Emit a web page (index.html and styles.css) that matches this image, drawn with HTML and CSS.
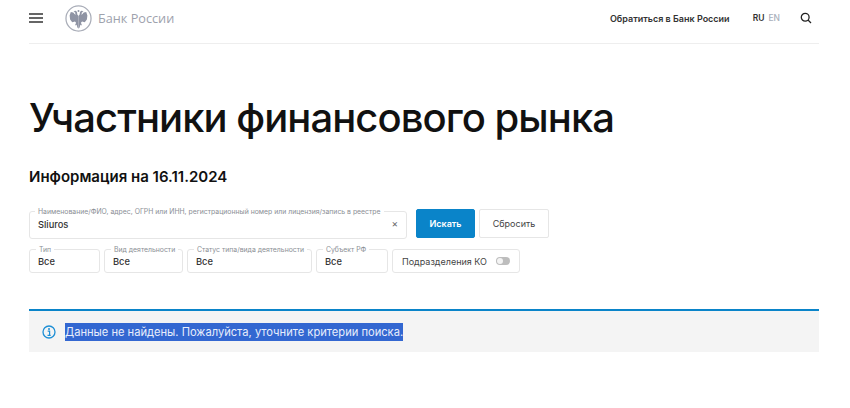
FILE: index.html
```
<!DOCTYPE html>
<html lang="ru">
<head>
<meta charset="utf-8">
<title>Участники финансового рынка</title>
<link rel="stylesheet" href="styles.css">
</head>
<body>
<div class="page">
  <header class="top">
    <div class="menu-icon"><span></span><span></span><span></span></div>
    <div class="brand">
      <svg class="emblem" width="27" height="27" viewBox="0 0 28 28">
        <circle cx="14" cy="14" r="13" fill="none" stroke="#a9adb8" stroke-width="1.300"/>
        <g fill="#8f94a4">
          <path id="half" d="M14 11.500L12.800 9.800 12.500 7.500Q11.900 5.600 10.300 6L8.800 7.300 10.500 7.600 10.900 10.300 8.500 7.900 6 7.300 4.800 11 5.300 15 7.500 17.800 10.300 17 11.500 18.500 10.300 21.200 12 20.600 13 23.500 14 24.300Z"/>
          <use href="#half" transform="matrix(-1 0 0 1 28 0)"/>
          <circle cx="14" cy="6.200" r="1"/>
        </g>
      </svg>
      <span class="brand-name">Банк России</span>
    </div>
    <nav class="tools">
      <span class="contact">Обратиться в Банк России</span>
      <span class="langs"><b>RU</b><i>EN</i></span>
      <svg class="search" width="12" height="12" viewBox="0 0 12 12">
        <circle cx="5.200" cy="5.200" r="3.900" fill="none" stroke="#222" stroke-width="1.300"/>
        <path d="M8 8l3 3" stroke="#222" stroke-width="1.300" fill="none"/>
      </svg>
    </nav>
  </header>

  <main>
    <h1 class="title">Участники финансового рынка</h1>
    <h2 class="subtitle">Информация на 16.11.2024</h2>

    <div class="row row-search">
      <div class="field field-main">
        <span class="legend">Наименование/ФИО, адрес, ОГРН или ИНН, регистрационный номер или лицензия/запись в реестре</span>
        <span class="value">Sliuros</span>
        <span class="clear">×</span>
      </div>
      <button class="btn btn-primary" type="button">Искать</button>
      <button class="btn btn-reset" type="button">Сбросить</button>
    </div>

    <div class="row row-filters">
      <div class="field f-type"><span class="legend">Тип</span><span class="value">Все</span></div>
      <div class="field f-kind"><span class="legend">Вид деятельности</span><span class="value">Все</span></div>
      <div class="field f-status"><span class="legend">Статус типа/вида деятельности</span><span class="value">Все</span></div>
      <div class="field f-region"><span class="legend">Субъект РФ</span><span class="value">Все</span></div>
      <div class="toggle-box"><span>Подразделения КО</span><span class="switch"><span class="knob"></span></span></div>
    </div>

    <div class="notice">
      <svg class="info" width="14" height="14" viewBox="0 0 14 14">
        <circle cx="7" cy="7" r="6" fill="none" stroke="#1e8fd5" stroke-width="1.300"/>
        <circle cx="7" cy="4.100" r="1" fill="#1e8fd5"/>
        <path d="M5.700 6.200H7.600V10M5.500 10.300H8.700" fill="none" stroke="#1e8fd5" stroke-width="1.200"/>
      </svg>
      <span class="selected">Данные не найдены. Пожалуйста, уточните критерии поиска.</span>
    </div>
  </main>
</div>
</body>
</html>
```
FILE: styles.css
```
* { box-sizing: border-box; }
html, body { margin: 0; padding: 0; background: #fff; }
body { font-family: Inter, "Liberation Sans", sans-serif; color: #222; overflow: hidden; height: 408px; }
.page { width: 790px; margin-left: 29px; }
.top { height: 44px; border-bottom: 1px solid #eeeeee; display: flex; align-items: center; padding-bottom: 7px; }
.menu-icon { width: 14px; display: flex; flex-direction: column; gap: 2px; margin-right: 22px; }
.menu-icon span { display: block; height: 2px; background: #666; }
.brand { display: flex; align-items: center; gap: 6px; }
.brand-name { font-family: "Open Sans", sans-serif; font-size: 12.700px; color: #9ea2ad; }
.tools { margin-left: auto; display: flex; align-items: center; font-size: 9px; font-weight: 600; padding-right: 7px; }
.contact { color: #333; margin-right: 23px; }
.langs { display: flex; gap: 4px; margin-right: 20px; font-size: 8.500px; }
.langs b { font-weight: 600; color: #333; }
.langs i { font-style: normal; font-weight: 500; color: #a9afbb; }
.title { margin: 51px 0 0; font-size: 40px; line-height: 46px; font-weight: 500; color: #111; letter-spacing: -0.950px; }
.subtitle { margin: 27px 0 0; font-size: 15px; line-height: 18px; font-weight: 600; color: #111; }
.row { display: flex; }
.row-search { margin-top: 23px; gap: 9px; align-items: flex-end; }
.row-filters { margin-top: 11px; gap: 4px; }
.field { position: relative; height: 24px; border: 1px solid #e6e6e6; border-radius: 3px; display: flex; align-items: center; padding-left: 8px; background: #fff; }
.field-main { width: 378px; height: 28px; margin-bottom: -1px; padding-bottom: 2px; }
.field-main .legend { left: 5px; }
.legend { position: absolute; top: -5px; left: 6px; padding: 0 3px; background: #fff; font-size: 6.860px; line-height: 9px; color: #8b8f96; white-space: nowrap; }
.value { font-size: 9.300px; font-weight: 500; color: #333; }
.clear { position: absolute; right: 8px; top: 5px; font-size: 10px; line-height: 12px; color: #666; }
.btn { height: 29px; border-radius: 2px; font-family: inherit; font-size: 9px; padding: 0; }
.btn-primary { width: 59px; border: 1px solid #0a84c9; background: #0a84c9; color: #fff; font-weight: 600; }
.btn-reset { width: 70px; margin-left: -5px; border: 1px solid #e6e6e6; background: #fff; color: #444; }
.f-type { width: 71px; }
.f-kind { width: 79px; }
.f-status { width: 125px; }
.f-region { width: 72px; }
.toggle-box { width: 128px; height: 24px; border: 1px solid #e6e6e6; border-radius: 3px; display: flex; align-items: center; justify-content: space-between; padding: 0 9px; font-size: 9px; color: #444; }
.switch { width: 14px; height: 8px; border-radius: 4px; background: #bdbdbd; position: relative; }
.knob { position: absolute; left: 1px; top: 1px; width: 6px; height: 6px; border-radius: 50%; background: #f4f4f4; }
.notice { margin-top: 36px; height: 43px; border-top: 2px solid #0a84c9; background: #f4f4f4; display: flex; align-items: center; padding-left: 13px; gap: 9px; }
.selected { background: #3367d1; color: #e8eefc; font-size: 11.150px; line-height: 18px; }
```
